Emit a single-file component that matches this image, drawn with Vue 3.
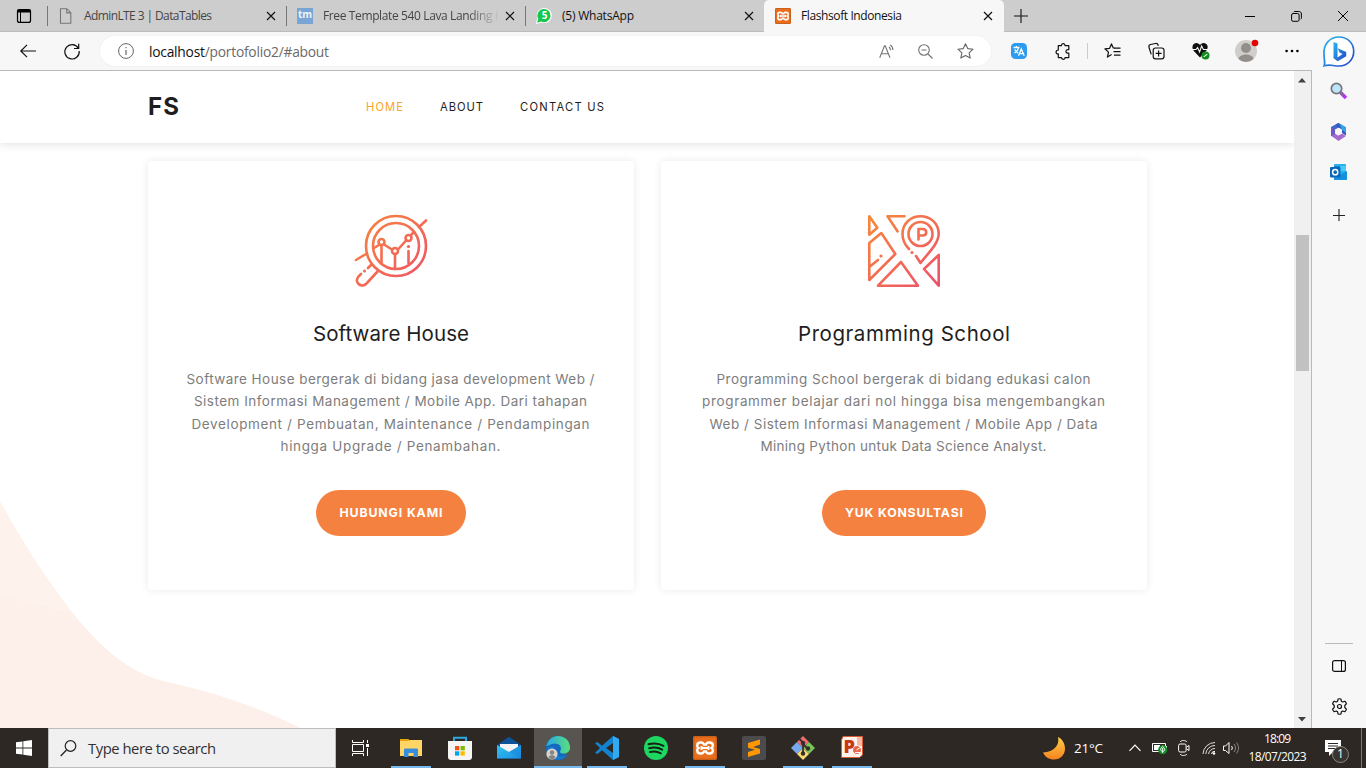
<script setup>
const tabs = [
  { icon: 'file', title: 'AdminLTE 3 | DataTables', width: 128 },
  { icon: 'tm', title: 'Free Template 540 Lava Landing P', width: 179, faded: true },
  { icon: 'wa', title: '(5) WhatsApp', width: 72, dark: true },
  { icon: 'xampp', title: 'Flashsoft Indonesia', width: 101, active: true },
]

const cards = [
  {
    icon: 'chart',
    title: 'Software House',
    titleWidth: 156,
    lines: [
      ['Software House bergerak di bidang jasa development Web /', 408],
      ['Sistem Informasi Management / Mobile App. Dari tahapan', 393],
      ['Development / Pembuatan, Maintenance / Pendampingan', 398],
      ['hingga Upgrade / Penambahan.', 220],
    ],
    action: 'HUBUNGI KAMI',
    actionWidth: 103,
  },
  {
    icon: 'map',
    title: 'Programming School',
    titleWidth: 212,
    lines: [
      ['Programming School bergerak di bidang edukasi calon', 374],
      ['programmer belajar dari nol hingga bisa mengembangkan', 403],
      ['Web / Sistem Informasi Management / Mobile App / Data', 388],
      ['Mining Python untuk Data Science Analyst.', 286],
    ],
    action: 'YUK KONSULTASI',
    actionWidth: 118,
  },
]

const nav = [
  { label: 'HOME', width: 37, active: true },
  { label: 'ABOUT', width: 43 },
  { label: 'CONTACT US', width: 84 },
]

// Tracks a single line of text so that it spans the given width.
const vFit = {
  mounted(el, { value }) {
    const gaps = el.textContent.trim().length - 1
    const natural = el.getBoundingClientRect().width
    const spacing = (value - natural) / gaps
    el.style.letterSpacing = `${spacing}px`
    el.style.marginRight = `${-spacing}px`
  },
}
</script>

<template>
  <div class="desktop">
    <svg class="defs" width="0" height="0">
      <defs>
        <linearGradient id="warmUser" gradientUnits="userSpaceOnUse" x1="4" y1="4" x2="70" y2="72">
          <stop offset="0" stop-color="#f7863c" />
          <stop offset="1" stop-color="#ee506c" />
        </linearGradient>
        <linearGradient id="bing" x1="0" y1="0" x2="1" y2="1">
          <stop offset="0" stop-color="#27b8f0" />
          <stop offset="1" stop-color="#2744c8" />
        </linearGradient>
        <linearGradient id="edgeTop" x1="0" y1="0" x2="1" y2="0">
          <stop offset="0" stop-color="#27a9e8" />
          <stop offset="1" stop-color="#5bdf7c" />
        </linearGradient>
        <linearGradient id="moon" x1="0" y1="0" x2="0" y2="1">
          <stop offset="0" stop-color="#ffcf45" />
          <stop offset="1" stop-color="#f58220" />
        </linearGradient>
        <linearGradient id="mailFront" x1="0" y1="0" x2="1" y2="1">
          <stop offset="0" stop-color="#32c5f4" />
          <stop offset="1" stop-color="#1b8ee0" />
        </linearGradient>
        <symbol id="xampp" viewBox="0 0 24 24">
          <rect width="24" height="24" rx="2" fill="#e96f1e" />
          <rect x=".8" y=".8" width="22.4" height="22.4" rx="1.5" fill="none" stroke="#bd5918" stroke-width="1" />
          <path d="M7.500 6.500h1c1.500 0 2 .8 2.500 2h2c.5-1.200 1-2 2.500-2h1c2 0 3.300 1.200 3.300 3 0 1.200-.5 2-1.300 2.500.8.500 1.300 1.300 1.300 2.500 0 1.800-1.300 3-3.300 3h-1c-1.500 0-2-.8-2.500-2h-2c-.5 1.200-1 2-2.500 2h-1c-2 0-3.300-1.200-3.300-3 0-1.200.5-2 1.300-2.500-.8-.5-1.300-1.300-1.300-2.500 0-1.800 1.300-3 3.300-3z" fill="none" stroke="#fff" stroke-width="2.400" />
          <path d="M8.500 10v4M15.500 10v4M8.500 12h7" stroke="#fff" stroke-width="1.900" />
        </symbol>
      </defs>
    </svg>

    <header class="tabbar">
      <div class="workspaces">
        <svg width="16" height="16" viewBox="16 8 16 16"><rect x="17.500" y="9.600" width="13" height="12.800" rx="2" fill="none" stroke="#000" stroke-width="1.200" /><path d="M17.500 9.500h13v3h-13z" /><path d="M20.500 12v10" stroke="#000" /></svg>
      </div>
      <div v-for="tab in tabs" :key="tab.title" class="tab" :class="{ active: tab.active, dark: tab.dark }">
        <span class="favicon">
          <svg v-if="tab.icon === 'file'" width="16" height="16"><path d="M2.500.7h6.300l4 4v10.600H2.500zM8.700.9v4h4" fill="none" stroke="#777" stroke-width="1.100" /></svg>
          <span v-else-if="tab.icon === 'tm'" class="tm">tm</span>
          <span v-else-if="tab.icon === 'wa'" class="wa">
            <svg width="16" height="16"><circle cx="8.300" cy="7.600" r="7.500" fill="#fff" /><path d="M0 16l1.300-6 5 4.500z" fill="#fff" /><path d="M1.200 14.800l1-4A6.600 6.600 0 1 1 5 13.500z" fill="#16c74b" /></svg><b>5</b>
          </span>
          <svg v-else width="16" height="16"><use href="#xampp" width="16" height="16" /></svg>
        </span>
        <span class="tab-title" :class="{ faded: tab.faded }"><span v-fit="tab.width" class="fit">{{ tab.title }}</span></span>
        <svg class="tab-close" width="10" height="10"><path d="M1 1l8 8M9 1L1 9" stroke="#111" stroke-width="1.200" /></svg>
      </div>
      <svg class="new-tab" width="14" height="14"><path d="M7 0v14M0 7h14" stroke="#111" stroke-width="1.100" /></svg>
      <div class="window-controls">
        <svg width="10" height="10"><path d="M0 5.500h10" stroke="#000" /></svg>
        <svg width="11" height="11"><rect x=".6" y="2.500" width="7.500" height="7.800" rx="1.500" fill="none" stroke="#000" /><path d="M2.700 1c.4-.4.8-.5 1.300-.5h3.800c1.500 0 2.600 1 2.600 2.500v3.800c0 .6-.2 1-.6 1.400" fill="none" stroke="#000" /></svg>
        <svg width="10" height="10"><path d="M0 0l10 10M10 0L0 10" stroke="#000" /></svg>
      </div>
    </header>

    <div class="toolbar">
      <svg class="back" width="16" height="14"><path d="M16 7H.8M7 .8L.8 7 7 13.200" fill="none" stroke="#111" stroke-width="1.200" /></svg>
      <svg class="reload" width="16" height="16"><path d="M14.300 5.200A7.200 7.200 0 1 0 15.200 8M14.700.7v4.800H10" fill="none" stroke="#111" stroke-width="1.200" /></svg>
      <div class="address">
        <svg width="16" height="16"><circle cx="8" cy="8" r="7.400" fill="none" stroke="#666" /><path d="M8 7v5M8 4v1.300" stroke="#666" stroke-width="1.200" /></svg>
        <span v-fit="180" class="url fit">localhost<i>/portofolio2/#about</i></span>
        <svg class="read" width="16" height="15"><path d="M.7 13.500L5.500 1.600h.7L11 13.500M2.300 9.500h7M10 2.800c1 .8 1.500 2 1.500 3.200M11.200.8c1.700 1 2.700 3 2.700 5" fill="none" stroke="#737373" stroke-width="1.100" transform="translate(0 .2)" /></svg>
        <svg class="zoomout" width="15" height="15"><circle cx="6" cy="6" r="5.300" fill="none" stroke="#737373" stroke-width="1.100" /><path d="M10 10l4.500 4.500M3.500 6h5" stroke="#737373" stroke-width="1.100" /></svg>
        <svg class="star" width="17" height="16"><path d="M8.500.8l2.200 4.800 5.400.6-4 3.600 1.100 5.300-4.700-2.700-4.700 2.700 1.100-5.300-4-3.600 5.400-.6z" fill="none" stroke="#666" stroke-width="1.100" stroke-linejoin="round" /></svg>
      </div>
      <svg class="translate" width="16" height="16"><rect width="16" height="16" rx="4.500" fill="#2d9bf0" /><path d="M2.500 4.500h6M5.500 3v1.500M3.500 10c2-1 3.600-3 4-5.500M3.700 6.500c.7 1.500 2 2.700 3.500 3.500M7.500 12.800L10.300 6l2.900 6.800M8.700 10.700h3.400" fill="none" stroke="#fff" stroke-width="1.300" /></svg>
      <svg class="puzzle" width="16" height="17"><path d="M3.300 2.600h3.200c-.3-2.700 3.700-2.700 3.500 0h3.800v4h-1c-2.500.2-2.500 3.500 0 3.600h1v4.400H10c.2 2.300-3.500 2.300-3.500 0H3.300v-3.700C.300 11.300.300 7.200 3.300 7z" fill="none" stroke="#111" stroke-width="1.200" stroke-linejoin="round" /></svg>
      <span class="separator"></span>
      <svg class="favorites" width="17" height="16"><path d="M10.500 5L9.300 5 7.500.9 5.600 5.300.9 5.800l3.600 3.300-1.100 5 4.200-2.500" fill="none" stroke="#111" stroke-width="1.200" stroke-linejoin="round" /><path d="M10 5.200h6.500M9.500 8.700h7M10 12.200h6.500" stroke="#111" stroke-width="1.200" /></svg>
      <svg class="collections" width="17" height="17"><rect x="5.200" y="5" width="10.800" height="10.800" rx="2.300" fill="none" stroke="#111" stroke-width="1.200" /><path d="M10.600 7.500V13.400M7.700 10.400h5.900M3.200 11.400L1 4.200C.6 2.800 1 2 2.400 1.500l5.200-1c1.400-.2 2.200.3 2.500 1.500l.2.800" fill="none" stroke="#111" stroke-width="1.200" /></svg>
      <svg class="health" width="18" height="18"><path d="M8 15.500L1.800 9C-1 5 1 1 4.300 1 6.200 1 7.300 2 8 3c.7-1 1.800-2 3.700-2C15 1 17.200 4.800 14.500 8.500z" fill="#111" /><path d="M0 7.500h4l1.600-2 2 4.500 2-6 1.800 3.500H16" fill="none" stroke="#f7f7f7" stroke-width="1.100" /><circle cx="13.500" cy="13.500" r="4" fill="#138a1e" /><path d="M11.700 14.900l3.600-2.800" stroke="#eafff0" stroke-width="1.200" /></svg>
      <svg class="avatar" width="25" height="24"><circle cx="11" cy="12" r="11" fill="#d0cecb" /><circle cx="11" cy="9" r="5" fill="#928e8a" /><path d="M3.500 20c1-6 14-6 15 0a11 11 0 0 1-15 0z" fill="#928e8a" /><circle cx="20" cy="4" r="3.300" fill="#e60000" /></svg>
      <svg class="dots" width="14" height="4"><circle cx="1.600" cy="2" r="1.300" /><circle cx="7" cy="2" r="1.300" /><circle cx="12.400" cy="2" r="1.300" /></svg>
    </div>

    <div class="body">
      <main class="page">
        <svg class="wave" width="310" height="240" viewBox="0 490 310 240">
          <path d="M0 501C20 538 45 577 72 612C108 657 138 677 172 683C218 694 262 708 304 730H0z" fill="#fef2ec" />
          <path d="M0 596L72 613C108 657 138 677 172 683C218 694 262 708 304 730H0z" fill="#fdf0eb" />
        </svg>
        <nav class="site-nav">
          <strong><span v-fit="31" class="fit">FS</span></strong>
          <div class="links">
            <span v-for="item in nav" :key="item.label" class="link" :class="{ current: item.active }"><span v-fit="item.width" class="fit">{{ item.label }}</span></span>
          </div>
        </nav>
        <section class="cards">
          <article v-for="card in cards" :key="card.title" class="card">
            <svg v-if="card.icon === 'chart'" width="72" height="72" class="art"><g stroke="url(#warmUser)"><circle cx="41" cy="31" r="30" /><circle cx="41" cy="31" r="23" /><path d="M64 12l7-6.500M19 33l5-3M29 29.500l8 5M43 34.500l8-9M56 20l3-3M26.500 31v18M40 39v15M53.500 36v12M1 45l10-6M13 53l3-3M6 59l-2.500 2.500c-5 6 3 12 8 7L23 56" /><circle cx="26.500" cy="27" r="3" /><circle cx="40" cy="36" r="3" /><circle cx="53.500" cy="23" r="3" /></g><circle cx="53.500" cy="31.500" r="1.600" fill="#f06259" /><circle cx="9.500" cy="56" r="1.600" fill="#f27155" /></svg>
            <svg v-else width="72" height="72" class="art"><g stroke="url(#warmUser)"><path d="M1.300 1.300v18.500l8-7zM19.500 1.300h17M19.500 1.300l10 15M1.300 28v37l26-26-14-21L1.300 28M1.300 52l8.700-7M10 70.700L33 47l17 23.700zM70.700 40v30.700L56 54zM48 41l4.500 7C60 38 70.700 29 70.700 18.500 70.700 8.500 62.500 1.300 52.500 1.300S34.500 8.500 34.500 19c0 6 2.500 11 6.500 15" /><circle cx="52.500" cy="19" r="12" /><path d="M50.500 24.500V14h4c5 0 5 6.500 0 6.500h-4" /></g><circle cx="13" cy="41" r="1.600" fill="#f4734e" /><circle cx="44" cy="37.500" r="1.600" fill="#f16958" /></svg>
            <h2><span v-fit="card.titleWidth" class="fit">{{ card.title }}</span></h2>
            <p><span v-for="line in card.lines" :key="line[0]" class="line"><span v-fit="line[1]" class="fit">{{ line[0] }}</span></span></p>
            <a class="action"><span v-fit="card.actionWidth" class="fit">{{ card.action }}</span></a>
          </article>
        </section>
      </main>
      <div class="scrollbar">
        <svg width="8" height="5"><path d="M4 0l4 4.500H0z" fill="#404040" /></svg>
        <div class="track"><div class="thumb"></div></div>
        <svg width="8" height="5"><path d="M4 4.500L0 0h8z" fill="#404040" /></svg>
      </div>
      <aside class="sidebar">
        <svg class="bing" width="32" height="33"><path d="M1.200 29.800C2.500 27 1 23 1 19 0 8 7 1 16 1s14.700 6.500 14.700 14.500S24.500 30 16 30c-6 0-9-2-14.800-.2z" fill="#fff" stroke="url(#bing)" stroke-width="1.700" /><path d="M10.500 6l4 1.500v14l5-3.500-3-1.500-1.800-4.200 8.500 3.700v4.300l-8.500 5-4.200-3z" fill="url(#bing)" /></svg>
        <svg class="side-search" width="18" height="18"><path d="M10.500 10.500l5.500 5.500" stroke="#b236ee" stroke-width="3.500" /><path d="M10 10l3 3" stroke="#77747c" stroke-width="2" /><circle cx="6.500" cy="6.500" r="5.200" fill="#bde5fa" stroke="#77747c" stroke-width="1.700" /></svg>
        <svg class="m365" width="18" height="18"><path d="M8 0L1 4v8.500l4 2.500V6.500L11.500 3z" fill="#4267cd" /><path d="M8.500 0l7.500 4.500v8L12 10V6.500L6 3z" fill="#3158ba" /><path d="M9 0l7 4.500V10l-4-3z" fill="#32a3e4" /><path d="M1 12.500L8.500 18l7.500-5-4-2.500-4 2-3-2z" fill="#a56acd" /><path d="M1 4v9l4-2V6z" fill="#695dc1" /><path d="M8.500 5.600l3 1.800v3.300l-3 1.800-3-1.800V7.400z" fill="#f7f7f7" /></svg>
        <svg class="outlook" width="18" height="16"><rect x="4" width="12" height="14" rx="1" fill="#28b1ed" /><path d="M4 2h6v5H4z" fill="#137fcd" /><path d="M10 2h6v5h-6z" fill="#45ccf6" /><path d="M4 9l6 2 7-4v8c0 .6-.4 1-1 1H4z" fill="#1490df" /><rect y="3" width="10.500" height="10.500" rx="1" fill="#0968b9" /><circle cx="5.200" cy="8.200" r="2.600" fill="none" stroke="#fff" stroke-width="1.500" /></svg>
        <svg class="side-add" width="13" height="13"><path d="M6 0v12M0 6.500h12" stroke="#222" stroke-width="1.100" /></svg>
        <div class="side-bottom">
          <svg width="14" height="12"><rect x=".6" y=".6" width="12.800" height="10.800" rx="2" fill="none" stroke="#111" stroke-width="1.200" /><path d="M9.500 0v12" stroke="#111" /></svg>
          <svg class="gear" width="17" height="17"><circle cx="8.500" cy="8.500" r="2" fill="none" stroke="#111" stroke-width="1.200" /><path d="M7.100 1q1.400-.5 2.800 0l.5 2.200 1.300.8 2.200-.7q1.100 1 1.500 2.500L13.800 7.500v2l1.600 1.600q-.4 1.500-1.500 2.600l-2.200-.7-1.300.8-.5 2.200q-1.400.5-2.800 0l-.5-2.200-1.300-.8-2.200.7q-1.100-1.100-1.500-2.600l1.600-1.600v-2L1.600 5.800Q2 4.300 3.100 3.300l2.200.7 1.300-.8z" fill="none" stroke="#111" stroke-width="1.200" stroke-linejoin="round" /></svg>
        </div>
      </aside>
    </div>

    <footer class="taskbar">
      <div class="start"><svg width="16" height="16"><path d="M0 2.300l6.500-.9v6.200H0zM7.300 1.200L16 0v7.600H7.300zM0 8.400h6.500v6.200L0 13.700zM7.300 8.400H16V16l-8.700-1.200z" fill="#fff" /></svg></div>
      <div class="search">
        <svg width="17" height="17"><circle cx="10.500" cy="6" r="5.300" fill="none" stroke="#222" stroke-width="1.200" /><path d="M6.500 10L.7 16" stroke="#222" stroke-width="1.300" /></svg>
        <span v-fit="128" class="fit">Type here to search</span>
      </div>
      <div class="slot taskview"><svg width="17" height="16"><path d="M.5 0v2.500h11V0M.5 16v-2.500h11V16M.5 4.500h11v7H.5zM15.500 0v3M15.500 8v8" fill="none" stroke="#fff" /><path d="M14 4h3v3h-3z" fill="#fff" /></svg></div>
      <div class="apps">
        <div class="slot running"><svg width="22" height="20"><path d="M0 1h8.500l1.500 2h12v15H0z" fill="#e6a30c" /><path d="M0 3h8l2-1h12v16H0z" fill="#ffd666" /><path d="M4 19v-7c0-1 .5-1.500 1.500-1.500h11c1 0 1.500.5 1.500 1.500v7h-4.500v-4h-5v4z" fill="#378edc" /></svg></div>
        <div class="slot"><svg width="24" height="24"><path d="M6 7V1.700h12V7" fill="none" stroke="#29a9df" stroke-width="2" /><path d="M0 5h24v16c0 2-1 3-3 3H3c-2 0-3-1-3-3z" fill="#f5f5f5" /><path d="M7 10h4.300v4.300H7z" fill="#f25022" /><path d="M12.500 10h4.300v4.300h-4.300z" fill="#7fba00" /><path d="M7 15.300h4.300v4.300H7z" fill="#00a4ef" /><path d="M12.500 15.300h4.300v4.300h-4.300z" fill="#ffb900" /></svg></div>
        <div class="slot"><svg width="24" height="24"><path d="M0 9L12 .8 24 9v13.500H0z" fill="#0b5299" /><path d="M3 8h18v8H3z" fill="#f3f3f3" /><path d="M0 9l12 7 12-7v13.500H0z" fill="url(#mailFront)" /><path d="M24 22.500L12 16 24 9z" fill="#1882d6" opacity=".45" /></svg></div>
        <div class="slot running current-app"><svg width="24" height="24"><path d="M.3 10C2 3.500 6.500 0 12 0c7 0 12 5 12 11.500 0 4-3 6-6.500 6 1.500 1.500 4 1 4.500 1C19 23 15.500 24 12 24 5 24-1 18 .3 10z" fill="#1269bd" /><path d="M.3 10C2 3.500 6.500 0 12 0c7 0 12 5 12 11.500 0 4-3 6-6.500 6-3 0-4.500-1.300-3-3C17 9 10 6 6 8c-2 .7-4 1.800-5.700 2z" fill="url(#edgeTop)" /><path d="M8 11c-2 7 5 13 13 7.500C15 27 3 25 1 14c1-3 4-4 7-3z" fill="#167bd0" /><circle cx="6" cy="18" r="5.600" fill="#d6d5d3" /><circle cx="6" cy="16.500" r="2.300" fill="#898582" /><path d="M2.500 21.500c.5-3.500 6.500-3.500 7 0-2 2.400-5 2.400-7 0z" fill="#898582" /></svg></div>
        <div class="slot running"><svg width="24" height="24"><path d="M18 0l6 3v18l-6 3L7 14.200 2.500 18 0 16.700 5 12 0 7.300 2.500 6 7 9.800zM18 7l-7 5 7 5z" fill="#1483cf" /><path d="M18 0l6 3v18l-6 3z" fill="#2faaf3" /></svg></div>
        <div class="slot"><svg width="24" height="24"><circle cx="12" cy="12" r="12" fill="#1ed760" /><path d="M4.500 8.300c5-1.500 10.500-1 15 1.500M5.200 12.200c4.500-1.300 9-.8 13 1.500M6 16c4-1 7.500-.6 10.800 1.300" fill="none" stroke="#121" stroke-width="2" stroke-linecap="round" /></svg></div>
        <div class="slot running"><svg width="24" height="24"><use href="#xampp" width="24" height="24" /></svg></div>
        <div class="slot"><svg width="24" height="24"><rect width="24" height="24" rx="2" fill="#4b4b4d" /><path d="M18 3.500v5L11 11l7 2v4.500L6 21v-5l7-2.200-7-2V7z" fill="#ff9800" /></svg></div>
        <div class="slot running"><svg width="24" height="24"><path d="M12 0l6 6-6 6-6-6z" fill="#ef6c70" /><path d="M18 6l6 6-6 6-6-6z" fill="#7ac65b" /><path d="M6 6l6 6-6 6-6-6z" fill="#79a9ed" /><path d="M12 12l6 6-6 6-6-6z" fill="#f9da74" /><path d="M8 2.500l4 4v12M12 8l5 5" fill="none" stroke="#35302c" stroke-width="1.800" /><circle cx="12" cy="7" r="2.200" fill="#35302c" /><circle cx="12" cy="17.500" r="2.200" fill="#35302c" /><circle cx="17" cy="12.500" r="2.200" fill="#35302c" /></svg></div>
        <div class="slot running"><span class="ppt"><svg width="22" height="22"><path d="M2 .5h19.500V19l-3 2.500H.5V4z" fill="#fff3ec" stroke="#d85b35" /><path d="M16 1h5v9h-5z" fill="#f4b8a2" /><circle cx="16" cy="14" r="4.500" fill="#e66849" stroke="#fff" /><path d="M15.500 14l5-3.500M14 16.500h5" stroke="#fff" /></svg><b>P</b></span></div>
      </div>
      <div class="tray">
        <svg class="moon" width="23" height="23"><path d="M15 0c2 8-4 15-15 15.500C2 20 6 22.500 11 22.500c7 0 11-5 11-11C22 6 19 2 15 0z" fill="url(#moon)" /></svg>
        <span v-fit="29" class="temp fit">21°C</span>
        <svg class="chevron" width="12" height="8"><path d="M.5 6.800L6 1.200l5.500 5.600" fill="none" stroke="#fff" stroke-width="1.200" /></svg>
        <svg class="battery" width="16" height="14"><path d="M.5 2.500h13v8H.5zM14.500 5v3" fill="none" stroke="#fff" /><path d="M2 4h6v5H2z" fill="#fff" /><circle cx="10.700" cy="8.700" r="4.600" fill="#138d27" /><path d="M10.700 5.500c4 3 1 5 0 5-1 0-4-2 0-5zM10.700 7v5" fill="none" stroke="#fff" /></svg>
        <svg class="meet" width="12" height="16"><rect x=".6" y="4" width="7.500" height="8" rx="1.500" fill="none" stroke="#fff" /><path d="M8.500 7l2.500-1.500v5L8.500 9M2 2c1.500-2 5.500-2 7 0M2 14c1.500 2 5.500 2 7 0" fill="none" stroke="#fff" /></svg>
        <svg class="wifi" width="14" height="14"><path d="M1 13A12 12 0 0 1 13 1.500M3.800 13A9 9 0 0 1 13 4.500M6.500 13A6.500 6.500 0 0 1 13 7.500" fill="none" stroke="#ddd" /><path d="M9.500 13A3 3 0 0 1 13 10.500" fill="none" stroke="#fff" /><circle cx="12" cy="12.500" r="1.300" fill="#fff" /></svg>
        <svg class="sound" width="17" height="14"><path d="M.5 5h2L6 1.500v11L2.500 9.500h-2z" fill="none" stroke="#fff" /><path d="M8.500 5c1 1.300 1 2.700 0 4" fill="none" stroke="#fff" /><path d="M11 3c2 2.500 2 5.500 0 8M13.500 1.500c2.700 3.500 2.700 7.500 0 11" fill="none" stroke="#888" /></svg>
        <div class="clock"><span v-fit="27" class="fit">18:09</span><span v-fit="58" class="fit">18/07/2023</span></div>
        <div class="notice"><svg width="16" height="16"><path d="M0 0h16v12H8l-4 4v-4H0z" fill="#fff" /><path d="M3 3.500h10M3 6h10M3 8.500h7" stroke="#2d2823" /></svg><span>1</span></div>
        <span class="peek"></span>
      </div>
    </footer>
  </div>
</template>

<style>
html, body { margin: 0; overflow: hidden; }
</style>

<style scoped>
* { box-sizing: border-box; }
.desktop { width: 1366px; height: 768px; display: flex; flex-direction: column; overflow: hidden; font-family: "Open Sans", "Noto Sans", sans-serif; font-size: 12px; color: #111; background: #f7f7f7; }
.defs { position: absolute; }
svg { display: block; flex: none; overflow: visible; }
.fit { display: inline-block; white-space: nowrap; flex: none; }

.tabbar { height: 32px; flex: none; display: flex; align-items: center; background: #cdcdcd; box-shadow: inset 0 -1px #bcbcbc; }
.workspaces { width: 47px; padding-left: 16px; }
.tab { width: 239px; height: 32px; display: flex; align-items: center; padding-left: 11px; background: linear-gradient(#777, #777) 0 6px / 1px 20px no-repeat; color: #454545; }
.tab.dark { color: #111; }
.tab.active { color: #111; width: 240px; background: #f7f7f7; border-radius: 5px 5px 0 0; }
.favicon { width: 26px; flex: none; }
.tm { display: block; width: 16px; height: 16px; background: #78a5d3; color: #eef4fa; font: bold 10px/13px "Open Sans", sans-serif; text-align: center; }
.wa { position: relative; display: block; width: 16px; }
.wa b { position: absolute; inset: 0; color: #fff; font: bold 10px/15px "Open Sans", sans-serif; text-align: center; padding-left: 1px; }
.tab-title { width: 182px; flex: none; font-size: 12px; line-height: 18px; position: relative; bottom: .5px; }
.tab-title.faded { mask-image: linear-gradient(90deg, #000 145px, transparent 176px); }
.new-tab { margin-left: 10px; }
.window-controls { margin-left: auto; display: flex; align-items: center; gap: 36px; padding-right: 18px; }

.toolbar { height: 38px; width: 1312px; flex: none; display: flex; align-items: center; background: #f7f7f7; }
.back { margin-left: 20px; }
.reload { margin-left: 28px; }
.address { margin-left: 20px; width: 891px; height: 30px; border-radius: 15px; background: #fff; display: flex; align-items: center; padding-left: 18px; box-shadow: 0 0 2px #e8e8e8; }
.url { margin-left: 15px; font-size: 13.8px; color: #111; }
.url i { font-style: normal; color: #6a6a6a; }
.read { margin-left: auto; }
.zoomout { margin-left: 23px; }
.star { margin: 0 17px 0 24px; }
.translate { margin-left: 20px; }
.puzzle { margin-left: 28px; }
.separator { width: 1px; height: 16px; margin-left: 16px; background: #ccc; }
.favorites { margin-left: 16px; }
.collections { margin-left: 27px; }
.health { margin-left: 27px; }
.avatar { margin-left: 25px; }
.dots { margin-left: 25px; }

.body { flex: 1; display: flex; min-height: 0; }
.page { position: relative; width: 1294px; border-top: 1px solid #b9b9b9; background: #fff; overflow: hidden; font-family: Inter, "Open Sans", sans-serif; }
.wave { position: absolute; left: 0; bottom: -2px; }
.site-nav { position: relative; height: 72px; display: flex; align-items: center; padding-left: 148px; background: #fff; box-shadow: 0 0 10px rgba(0, 0, 0, .15); }
.site-nav strong { width: 218px; font-size: 24px; line-height: 30px; color: #1e1e1e; }
.links { display: flex; gap: 37px; font-size: 11.200px; color: #1e1e1e; }
.links .current { color: #fba427; }
.cards { position: relative; display: flex; gap: 27px; padding: 18px 0 0 148px; }
.card { width: 486px; height: 429px; display: flex; flex-direction: column; align-items: center; padding-top: 54px; border-radius: 4px; background: #fff; box-shadow: 0 0 8px rgba(0, 0, 0, .09); }
.art g, .art { fill: none; stroke-width: 2.6; stroke-linecap: round; stroke-linejoin: round; }
.card h2 { margin: 31px 0 0; font-size: 20.500px; line-height: 32px; font-weight: 400; color: #1e1e1e; }
.card p { margin: 18px 0 0; font-size: 13.500px; line-height: 22.400px; color: #7d7d7d; text-align: center; }
.line { display: block; height: 22.400px; margin-right: 1px; }
.action { height: 46px; margin-top: 32px; padding: 0 23px; display: flex; align-items: center; border-radius: 23px; background: #f58140; color: #fff; font-size: 12.300px; font-weight: 700; }

.scrollbar { width: 18px; display: flex; flex-direction: column; align-items: center; padding: 7px 1px 6px 0; background: #f0f0f0; border-right: 1px solid #b9b9b9; border-top: 1px solid #b9b9b9; }
.track { flex: 1; padding-top: 152px; }
.thumb { width: 13px; height: 136px; background: #c1c1c1; }
.sidebar { width: 54px; margin-top: -34px; display: flex; flex-direction: column; align-items: center; background: #f7f7f7; position: relative; }
.side-search { margin-top: 13px; }
.m365 { margin-top: 23px; }
.outlook { margin-top: 23px; }
.side-add { margin-top: 29px; }
.side-bottom { margin-top: auto; height: 85px; width: 28px; border-top: 1px solid #bbb; display: flex; flex-direction: column; align-items: center; padding-top: 16px; }
.gear { margin-top: 26px; }

.taskbar { height: 40px; flex: none; display: flex; align-items: center; background: #2d2823; color: #fff; }
.start { width: 48px; padding-left: 16px; }
.search { width: 288px; height: 40px; display: flex; align-items: center; gap: 11px; padding-left: 11px; background: #f0f0f0; border: 1px solid #bdbdbd; color: #303030; font-size: 14.800px; }
.slot { width: 48px; height: 40px; display: flex; align-items: center; justify-content: center; }
.apps { display: flex; gap: 1px; margin-left: 3px; }
.running { background: linear-gradient(#76b9ed, #76b9ed) 4px 38px / 40px 2px no-repeat; }
.current-app { background: linear-gradient(#76b9ed, #76b9ed) 0 38px / 48px 2px no-repeat #585550; }
.ppt { position: relative; display: block; margin: 0 1px 2px 0; }
.ppt b { position: absolute; left: 3px; top: -1px; color: #c8380e; font: 900 18px/22px "Open Sans", sans-serif; }
.tray { margin-left: auto; display: flex; align-items: center; height: 40px; }
.temp { margin-left: 8px; font-size: 13.500px; }
.chevron { margin-left: 26px; }
.battery { margin-left: 11px; }
.meet { margin-left: 10px; }
.wifi { margin-left: 12px; }
.sound { margin-left: 7px; }
.clock { width: 57px; margin-left: 9px; display: flex; flex-direction: column; align-items: center; font-size: 12px; line-height: 18px; padding-bottom: 1px; }
.notice { position: relative; width: 24px; height: 24px; margin-left: 19px; padding-top: 4px; }
.notice span { position: absolute; left: 7px; top: 10px; width: 17px; height: 17px; border-radius: 50%; border: 1px solid #8b8885; background: #383430; font-size: 12px; line-height: 14px; text-align: center; }
.peek { width: 1px; height: 40px; margin: 0 4px 0 12px; background: #777; }
</style>
